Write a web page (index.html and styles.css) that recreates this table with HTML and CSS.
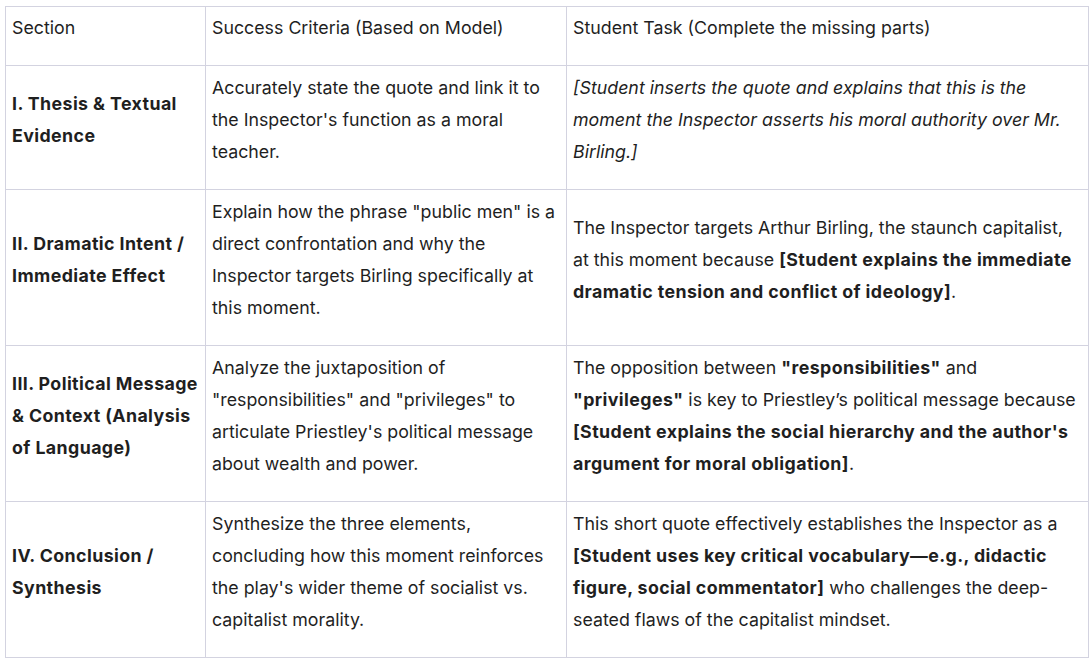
FILE: index.html
```html
<!DOCTYPE html>
<html>
<head>
<meta charset="utf-8">
<link rel="stylesheet" href="styles.css">
</head>
<body>
<table class="grid">
  <colgroup>
    <col class="c1"><col class="c2"><col class="c3">
  </colgroup>
  <thead>
    <tr>
      <th>Section</th>
      <th>Success Criteria (Based on Model)</th>
      <th>Student Task (Complete the missing parts)</th>
    </tr>
  </thead>
  <tbody>
    <tr>
      <td><b>I. Thesis &amp; Textual<br>Evidence</b></td>
      <td>Accurately state the quote and link it to<br>the Inspector's function as a moral<br>teacher.</td>
      <td><i>[Student inserts the quote and explains that this is the<br>moment the Inspector asserts his moral authority over Mr.<br>Birling.]</i></td>
    </tr>
    <tr>
      <td><b>II. Dramatic Intent /<br>Immediate Effect</b></td>
      <td>Explain how the phrase "public men" is a<br>direct confrontation and why the<br>Inspector targets Birling specifically at<br>this moment.</td>
      <td>The Inspector targets Arthur Birling, the staunch capitalist,<br>at this moment because <b>[Student explains the immediate<br>dramatic tension and conflict of ideology]</b>.</td>
    </tr>
    <tr>
      <td><b>III. Political Message<br>&amp; Context (Analysis<br>of Language)</b></td>
      <td>Analyze the juxtaposition of<br>"responsibilities" and "privileges" to<br>articulate Priestley's political message<br>about wealth and power.</td>
      <td>The opposition between <b>"responsibilities"</b> and<br><b>"privileges"</b> is key to Priestley’s political message because<br><b>[Student explains the social hierarchy and the author's<br>argument for moral obligation]</b>.</td>
    </tr>
    <tr>
      <td><b>IV. Conclusion /<br>Synthesis</b></td>
      <td>Synthesize the three elements,<br>concluding how this moment reinforces<br>the play's wider theme of socialist vs.<br>capitalist morality.</td>
      <td>This short quote effectively establishes the Inspector as a<br><b>[Student uses key critical vocabulary—e.g., didactic<br>figure, social commentator]</b> who challenges the deep-<br>seated flaws of the capitalist mindset.</td>
    </tr>
  </tbody>
</table>
</body>
</html>
```
FILE: styles.css
```css
html, body {
  margin: 0;
  background: #ffffff;
}
body {
  padding: 6px 3px 0 5px;
  font-family: Inter, "Noto Sans", sans-serif;
  font-size: 17.8px;
  color: #1f1f1f;
}
.grid {
  border-collapse: collapse;
  table-layout: fixed;
  width: 1083px;
}
.c1 { width: 200px; }
.c2 { width: 361px; }
.c3 { width: 522px; }
.grid th,
.grid td {
  border: 1px solid #d3d3e0;
  padding: 6px 2px 21px 6px;
  line-height: 32px;
  text-align: left;
  vertical-align: middle;
  white-space: nowrap;
  overflow: hidden;
}
.grid th {
  font-weight: 400;
  padding-top: 5px;
}
.grid b {
  font-weight: 700;
  letter-spacing: 0.4px;
}
```
